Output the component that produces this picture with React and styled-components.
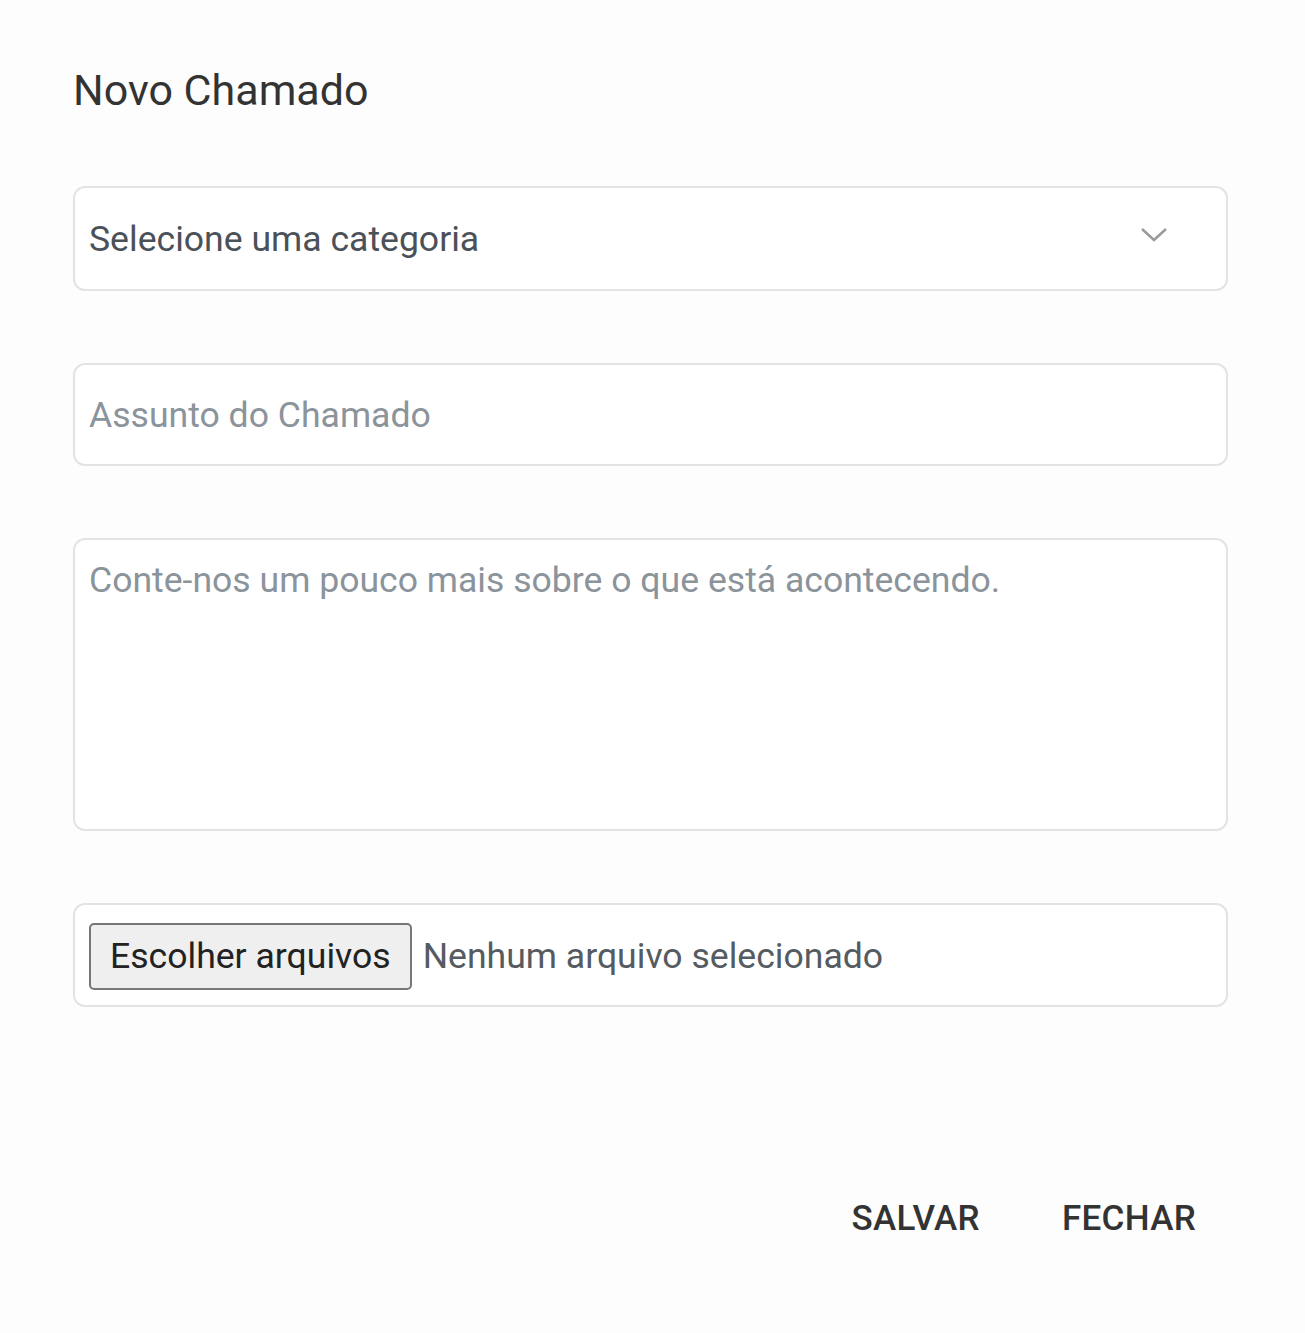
import React from "react";
import styled, { createGlobalStyle } from "styled-components";

const GlobalStyle = createGlobalStyle`
  html, body {
    margin: 0;
    padding: 0;
    background: #fdfdfd;
  }
  body {
    font-family: Roboto, "Liberation Sans", Arial, sans-serif;
  }
`;

const Page = styled.div`
  width: 1305px;
  min-height: 1333px;
  box-sizing: border-box;
  padding: 64px 77px 0 73px;
  background: #fdfdfd;
  display: flex;
  flex-direction: column;
`;

const Title = styled.h1`
  margin: 0 0 69px;
  font-size: 43px;
  font-weight: 400;
  color: #333;
  line-height: 53px;
`;

const Fields = styled.div`
  display: flex;
  flex-direction: column;
  gap: 72px;
`;

const Box = styled.div`
  box-sizing: border-box;
  height: ${(p) => p.height || 105}px;
  border: 2.5px solid #e3e3e3;
  border-radius: 12px;
  background: #fff;
  padding: ${(p) => (p.multiline ? "14px 14px" : "3px 14px 0")};
  display: flex;
  align-items: ${(p) => (p.multiline ? "flex-start" : "center")};
  gap: 11px;
  font-size: 35.6px;
  line-height: 1.5;
  color: ${(p) => (p.placeholder ? "#8b939b" : "#4b5158")};
`;

const Grow = styled.span`
  flex: 1;
`;

const Chevron = styled.svg`
  width: 28px;
  height: 16px;
  margin-right: 44px;
  margin-top: -10px;
`;

const FileButton = styled.span`
  box-sizing: border-box;
  height: 67px;
  padding: 0 19px;
  display: flex;
  align-items: center;
  background: #efefef;
  border: 2px solid #777;
  border-radius: 5px;
  color: #222;
  font-size: 35.6px;
`;

const FileName = styled.span`
  color: #555b61;
  font-size: 35.6px;
`;

const Actions = styled.div`
  display: flex;
  justify-content: flex-end;
  gap: 82px;
  margin-top: 191px;
  padding-right: 32px;
`;

const Action = styled.button`
  background: none;
  border: none;
  padding: 0;
  font-family: inherit;
  font-size: 35px;
  font-weight: 500;
  color: #333;
  letter-spacing: 0.3px;
`;

const App = () => {
  return (
    <Page>
      <GlobalStyle />
      <Title>Novo Chamado</Title>
      <Fields>
        <Box>
          <Grow>Selecione uma categoria</Grow>
          <Chevron viewBox="0 0 28 16" fill="none">
            <path d="M2 2 L14 13 L26 2" stroke="#9a9a9a" strokeWidth="2.5" />
          </Chevron>
        </Box>
        <Box placeholder="true" height={103}>
          Assunto do Chamado
        </Box>
        <Box placeholder="true" multiline height={293}>
          Conte-nos um pouco mais sobre o que está acontecendo.
        </Box>
        <Box height={104}>
          <FileButton>Escolher arquivos</FileButton>
          <FileName>Nenhum arquivo selecionado</FileName>
        </Box>
      </Fields>
      <Actions>
        <Action>SALVAR</Action>
        <Action>FECHAR</Action>
      </Actions>
    </Page>
  );
};

export default App;
